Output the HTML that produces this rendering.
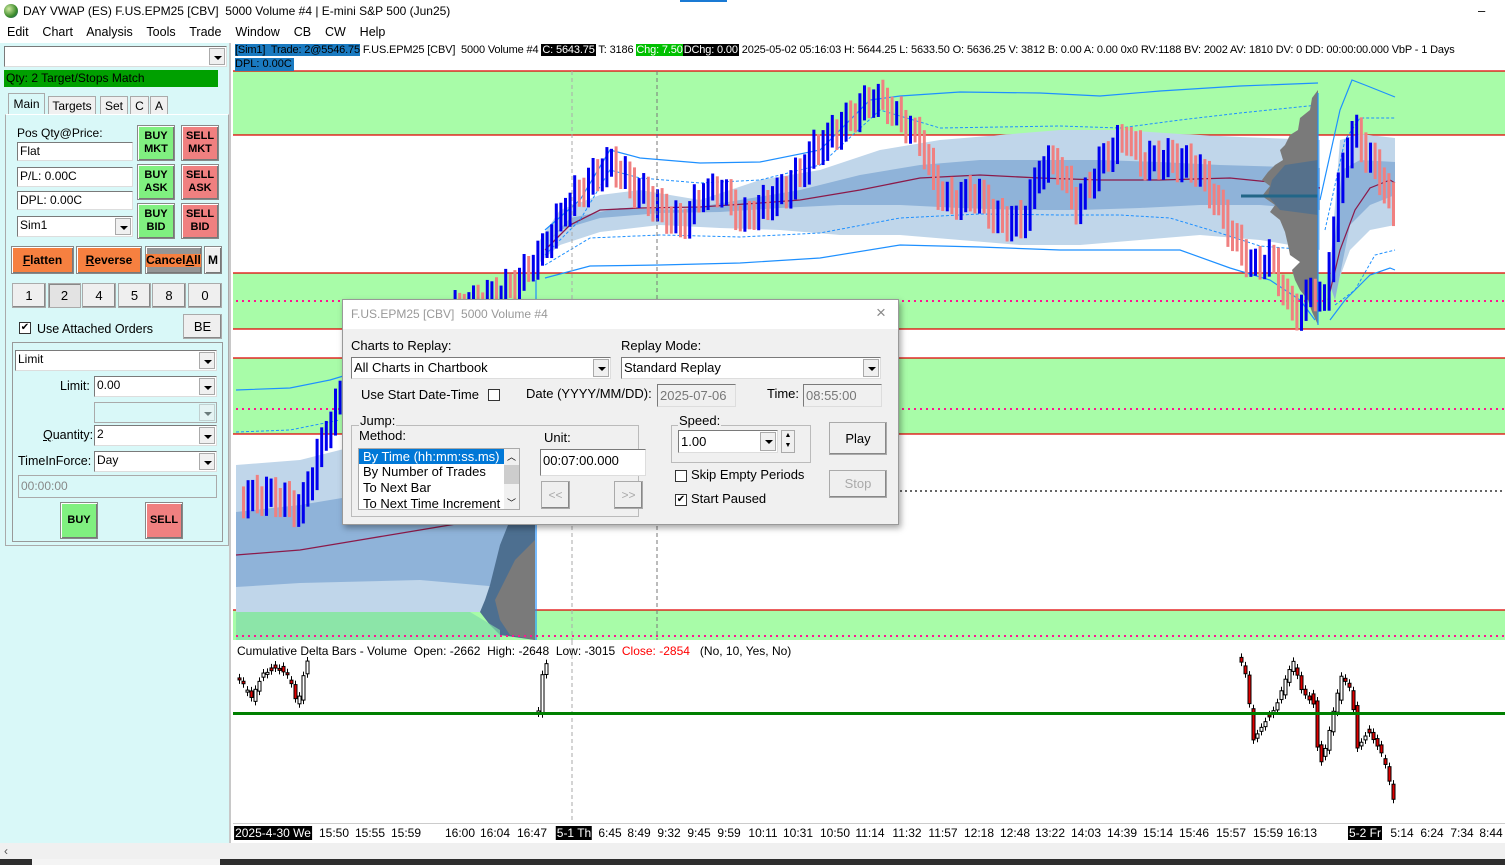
<!DOCTYPE html>
<html><head><meta charset="utf-8">
<style>
*{box-sizing:border-box;margin:0;padding:0}
body{width:1505px;height:865px;overflow:hidden;background:#fff;font-family:"Liberation Sans",Arial,sans-serif;font-size:12px;color:#000;position:relative}
.a{position:absolute}
.btn{position:absolute;border:1px solid #888;box-shadow:inset 1px 1px 0 #fff,inset -1px -1px 0 #777;text-align:center;font-weight:bold;font-size:11px;line-height:13px;display:flex;align-items:center;justify-content:center}
.inp{position:absolute;background:#fff;border:1px solid #7a7a7a;border-right-color:#ddd;border-bottom-color:#ddd;padding-left:2px;font-size:12px;line-height:17px;white-space:nowrap;overflow:hidden}
.dd{position:absolute;right:1px;top:1px;bottom:1px;width:16px;background:#f0f0f0;border:1px solid #aaa}
.dd:after{content:"";position:absolute;left:4px;top:7px;border-left:4px solid transparent;border-right:4px solid transparent;border-top:4px solid #000}
.nb{position:absolute;top:283px;height:25px;background:#efefef;border:1px solid #aaa;box-shadow:inset -1px -1px 0 #888;text-align:center;line-height:24px;font-size:13px}
.tab{position:absolute;top:96px;height:19px;background:#f0f0f0;border:1px solid #aaa;border-bottom:none;text-align:center;line-height:18px;font-size:12px}
.nar{font-family:"Liberation Sans Narrow","Liberation Sans",sans-serif}
.ax{position:absolute;top:826px;font-size:12px;transform:translateX(-50%);white-space:nowrap}
.blk{background:#000;color:#fff;padding:0 1px}
.dlg{font-size:13px}
</style></head><body>
<div class="a" style="left:0;top:0;width:1505px;height:22px;background:#fff"></div>
<div class="a" style="left:4px;top:4px;width:14px;height:14px;border-radius:50%;background:radial-gradient(circle at 35% 35%,#cfe9a0,#3a8a2a 60%,#1f5a8a)"></div>
<div class="a" style="left:23px;top:4px;font-size:12px">DAY VWAP (ES) F.US.EPM25 [CBV]&nbsp; 5000 Volume #4 | E-mini S&amp;P 500 (Jun25)</div>
<div class="a" style="left:680px;top:0;width:47px;height:2px;background:#1a7ad4"></div>
<div class="a" style="left:1478px;top:3px;font-size:13px">–</div>
<div class="a" style="left:7px;top:25px;font-size:12.5px">Edit&nbsp;&nbsp;&nbsp; Chart&nbsp;&nbsp;&nbsp; Analysis&nbsp;&nbsp;&nbsp; Tools&nbsp;&nbsp;&nbsp; Trade&nbsp;&nbsp;&nbsp; Window&nbsp;&nbsp;&nbsp; CB&nbsp;&nbsp;&nbsp; CW&nbsp;&nbsp;&nbsp; Help</div>

<div class="a" style="left:0;top:43px;width:231px;height:800px;background:#d9f8f8;border-right:2px solid #c8c8c8"></div>
<div class="inp" style="left:4px;top:46px;width:223px;height:21px"><div class="dd"></div></div>
<div class="a" style="left:4px;top:70px;width:214px;height:17px;background:#00a000;font-size:12px;line-height:17px;padding-left:2px">Qty: 2 Target/Stops Match</div>
<div class="tab" style="left:8px;top:93px;width:37px;height:22px;background:#d9f8f8;line-height:20px">Main</div>
<div class="tab" style="left:48px;width:48px">Targets</div>
<div class="tab" style="left:100px;width:28px">Set</div>
<div class="tab" style="left:130px;width:19px">C</div>
<div class="tab" style="left:150px;width:18px">A</div>
<div class="a" style="left:5px;top:114px;width:224px;height:432px;border:1px solid #aaa;border-top-color:#fff"></div>
<div class="a" style="left:17px;top:126px;font-size:12px">Pos Qty@Price:</div>
<div class="inp" style="left:17px;top:142px;width:116px;height:19px">Flat</div>
<div class="inp" style="left:17px;top:167px;width:116px;height:20px">P/L: 0.00C</div>
<div class="inp" style="left:17px;top:191px;width:116px;height:19px">DPL: 0.00C</div>
<div class="inp" style="left:17px;top:216px;width:116px;height:21px">Sim1<div class="dd"></div></div>
<div class="btn" style="left:137px;top:125px;width:38px;height:36px;background:#80f080">BUY<br>MKT</div>
<div class="btn" style="left:181px;top:125px;width:38px;height:36px;background:#f08080">SELL<br>MKT</div>
<div class="btn" style="left:137px;top:164px;width:38px;height:36px;background:#80f080">BUY<br>ASK</div>
<div class="btn" style="left:181px;top:164px;width:38px;height:36px;background:#f08080">SELL<br>ASK</div>
<div class="btn" style="left:137px;top:203px;width:38px;height:36px;background:#80f080">BUY<br>BID</div>
<div class="btn" style="left:181px;top:203px;width:38px;height:36px;background:#f08080">SELL<br>BID</div>
<div class="btn" style="left:11px;top:246px;width:63px;height:28px;background:#f68040;font-size:12px"><u>F</u>latten</div>
<div class="btn" style="left:76px;top:246px;width:66px;height:28px;background:#f68040;font-size:12px"><u>R</u>everse</div>
<div class="btn" style="left:145px;top:246px;width:57px;height:28px;background:#959595;font-size:12px"><span style="background:#f68040">Cancel<u>A</u>ll</span></div>
<div class="btn" style="left:204px;top:246px;width:18px;height:28px;background:#efefef;font-size:12px">M</div>
<div class="nb" style="left:12px;width:34px">1</div>
<div class="nb" style="left:48px;width:33px;background:#e3e3e3;box-shadow:inset 1px 1px 0 #888">2</div>
<div class="nb" style="left:82px;width:34px">4</div>
<div class="nb" style="left:118px;width:33px">5</div>
<div class="nb" style="left:152px;width:34px">8</div>
<div class="nb" style="left:188px;width:34px">0</div>
<div class="a" style="left:19px;top:322px;width:12px;height:12px;background:#fff;border:1px solid #333;font-size:10px;line-height:10px;text-align:center">✔</div>
<div class="a" style="left:37px;top:322px;font-size:12.5px">Use Attached Orders</div>
<div class="nb" style="left:183px;top:314px;width:39px;height:25px">BE</div>
<div class="a" style="left:12px;top:342px;width:211px;height:200px;border:1px solid #999"></div>
<div class="inp" style="left:15px;top:350px;width:202px;height:21px">Limit<div class="dd"></div></div>
<div class="a" style="left:60px;top:379px;font-size:12.5px">Limit:</div>
<div class="inp" style="left:94px;top:376px;width:123px;height:21px">0.00<div class="dd"></div></div>
<div class="inp" style="left:94px;top:402px;width:123px;height:21px;background:#d9f8f8;border-color:#aaa"><div class="dd" style="opacity:.5"></div></div>
<div class="a" style="left:43px;top:428px;font-size:12.5px"><u>Q</u>uantity:</div>
<div class="inp" style="left:94px;top:425px;width:123px;height:21px">2<div class="dd"></div></div>
<div class="a" style="left:18px;top:454px;font-size:12.5px">TimeInForce:</div>
<div class="inp" style="left:94px;top:451px;width:123px;height:21px">Day<div class="dd"></div></div>
<div class="inp" style="left:18px;top:475px;width:199px;height:23px;background:#d9f8f8;color:#888;border-color:#aaa;line-height:21px">00:00:00</div>
<div class="btn" style="left:60px;top:502px;width:38px;height:37px;background:#80f080">BUY</div>
<div class="btn" style="left:145px;top:502px;width:38px;height:37px;background:#f08080">SELL</div>

<svg class="a" style="left:233px;top:43px" width="1272" height="800" viewBox="233 43 1272 800">
<rect x="233" y="43" width="1272" height="800" fill="#fff"/>
<rect x="233" y="71" width="1272" height="64" fill="#a8fca8"/>
<rect x="233" y="273" width="1272" height="56" fill="#a8fca8"/>
<rect x="233" y="358" width="1272" height="76" fill="#a8fca8"/>
<rect x="233" y="610" width="1272" height="30" fill="#a8fca8"/>
<g stroke="#e00000" stroke-width="1.2">
<line x1="233" y1="71" x2="1505" y2="71"/><line x1="233" y1="135" x2="1505" y2="135"/>
<line x1="233" y1="273" x2="1505" y2="273"/><line x1="233" y1="329" x2="1505" y2="329"/>
<line x1="233" y1="358" x2="1505" y2="358"/><line x1="233" y1="434" x2="1505" y2="434"/>
<line x1="233" y1="610" x2="1505" y2="610"/>
</g>
<polygon points="236,465 300,460 360,445 420,430 480,410 535,395 535,612 300,612 236,612" fill="#c0d6ea"/>
<polygon points="236,512 300,505 360,495 420,485 480,470 535,465 535,590 420,580 300,583 236,587" fill="#8fb3d9"/>
<polyline points="236,555 300,550 360,540 420,530 480,520 535,512" fill="none" stroke="#8b1a4a" stroke-width="1.3"/>
<polyline points="236,390 290,388 330,380 380,365" fill="none" stroke="#1e90ff" stroke-width="1.2"/>
<polyline points="236,432 290,430 340,420" fill="none" stroke="#1e90ff" stroke-dasharray="3,2"/>
<polygon points="540,240 560,210 600,195 640,190 700,200 760,180 820,170 880,150 940,140 1000,135 1060,130 1120,130 1180,134 1240,137 1320,140 1320,250 1260,240 1200,235 1140,240 1080,245 1020,245 960,240 900,235 840,235 780,230 720,228 660,225 600,232 560,245 540,262" fill="#c0d6ea"/>
<polygon points="545,245 570,218 620,208 680,210 740,200 800,190 860,175 920,165 980,160 1040,160 1100,160 1160,162 1220,165 1320,168 1320,210 1260,205 1200,205 1140,208 1080,210 1020,210 960,208 900,205 840,205 780,208 720,212 660,213 600,218 560,230" fill="#8fb3d9"/>
<polyline points="545,250 570,225 600,210 640,208 700,207 760,203 800,200 860,190 920,178 980,175 1040,178 1100,180 1160,180 1230,178 1300,185 1320,188" fill="none" stroke="#8b1a4a" stroke-width="1.3"/>
<polyline points="545,230 580,200 610,150 640,158 700,163 760,162 820,150 870,100 900,96 960,92 1040,93 1100,96 1160,91 1240,86 1318,83" fill="none" stroke="#1e90ff" stroke-width="1.2"/>
<polyline points="545,255 580,220 610,170 640,178 700,183 760,180 820,165 880,110 940,128 1000,127 1060,126 1120,128 1180,120 1240,113 1318,105" fill="none" stroke="#1e90ff" stroke-dasharray="3,2"/>
<polyline points="545,265 590,238 660,235 740,237 820,233 900,218 980,214 1060,215 1120,215 1170,218 1220,233 1260,246 1310,250" fill="none" stroke="#1e90ff" stroke-dasharray="3,2"/>
<polyline points="545,278 590,266 660,265 740,263 820,258 900,245 980,247 1060,250 1130,250 1180,250 1230,268 1270,280 1300,300 1315,320" fill="none" stroke="#1e90ff" stroke-width="1.2"/>
<polygon points="1330,270 1340,140 1360,134 1395,138 1395,225 1370,230 1350,250 1335,290" fill="#c0d6ea"/>
<polygon points="1330,285 1342,170 1360,160 1395,162 1395,195 1370,205 1350,225 1335,300" fill="#8fb3d9"/>
<polyline points="1328,300 1340,250 1355,210 1370,188 1390,180 1395,183" fill="none" stroke="#8b1a4a" stroke-width="1.2"/>
<polyline points="1320,200 1340,110 1352,80 1365,85 1395,97" fill="none" stroke="#1e90ff" stroke-width="1.2"/>
<polyline points="1325,230 1345,140 1360,118 1395,118" fill="none" stroke="#1e90ff" stroke-dasharray="3,2"/>
<polyline points="1335,305 1355,290 1375,255 1395,250" fill="none" stroke="#1e90ff" stroke-dasharray="3,2"/>
<polyline points="1330,320 1345,300 1370,275 1390,268 1395,270" fill="none" stroke="#1e90ff" stroke-width="1.2"/>
<polygon points="1318,90 1312,98 1310,110 1300,118 1298,130 1290,135 1285,145 1280,150 1283,160 1275,165 1268,172 1262,180 1270,186 1262,196 1275,205 1270,212 1280,220 1285,232 1288,245 1290,255 1300,262 1292,270 1295,280 1300,290 1308,300 1312,312 1318,325" fill="#7a7a7a"/>
<polygon points="1318,160 1285,165 1272,180 1268,196 1280,210 1318,215" fill="#4d6f90" opacity="0.8"/>
<line x1="1241" y1="196" x2="1318" y2="196" stroke="#226688" stroke-width="3"/>
<line x1="1318" y1="93" x2="1318" y2="325" stroke="#1e90ff" stroke-width="1.2"/>
<polygon points="535,470 525,480 520,500 510,520 500,545 495,565 490,585 485,600 480,612 490,625 500,635 535,640" fill="#4d6f90"/>
<polygon points="535,540 515,560 505,580 495,600 500,620 510,635 535,640" fill="#7a7a7a"/>
<polygon points="236,612 470,612 500,630 500,640 236,640" fill="#80dca8" opacity="0.7"/>
<line x1="536" y1="280" x2="536" y2="640" stroke="#1e90ff" stroke-width="1.2"/>
<g stroke="#ff1493" stroke-width="2" stroke-dasharray="2,4">
<line x1="236" y1="301" x2="1505" y2="301"/><line x1="236" y1="409" x2="1505" y2="409"/><line x1="236" y1="636" x2="1505" y2="636"/>
</g>
<line x1="540" y1="491" x2="1505" y2="491" stroke="#333" stroke-width="1.5" stroke-dasharray="2,3"/>
<g id="bars"></g>
<line x1="572" y1="71" x2="572" y2="823" stroke="#aaa" stroke-dasharray="4,3"/>
<line x1="657" y1="71" x2="657" y2="640" stroke="#777" stroke-dasharray="4,3"/>
<rect x="233" y="641" width="1272" height="182" fill="#fff"/>
<line x1="572" y1="641" x2="572" y2="823" stroke="#aaa" stroke-dasharray="4,3"/>
<g id="cd"></g>
<line x1="233" y1="713.5" x2="1505" y2="713.5" stroke="#008000" stroke-width="3"/>
<line x1="233" y1="823.5" x2="1505" y2="823.5" stroke="#ccc"/>
<rect x="233" y="824" width="1272" height="20" fill="#fff"/>
</svg>

<div class="a" style="left:235px;top:43px;width:1270px;height:15px;background:#fff;font-size:11px;line-height:15px;white-space:nowrap;overflow:hidden;letter-spacing:-0.15px"><span style="background:#1a7ac0">[Sim1]&nbsp; Trade: 2@5546.75</span> F.US.EPM25 [CBV]&nbsp; 5000 Volume #4 <span class="blk">C: 5643.75</span> T: 3186 <span style="background:#00c000;color:#fff">Chg: 7.50</span><span class="blk">DChg: 0.00</span> 2025-05-02 05:16:03 H: 5644.25 L: 5633.50 O: 5636.25 V: 3812 B: 0.00 A: 0.00 0x0 RV:1188 BV: 2002 AV: 1810 DV: 0 DD: 00:00:00.000 VbP - 1 Days</div>
<div class="a" style="left:235px;top:58px;height:13px;background:#1a7ac0;font-size:11px;line-height:13px;padding-right:2px">DPL: 0.00C</div>
<div class="a" style="left:237px;top:644px;font-size:12px">Cumulative Delta Bars - Volume&nbsp; Open: -2662&nbsp; High: -2648&nbsp; Low: -3015&nbsp; <span style="color:#f00">Close: -2854</span>&nbsp;&nbsp; (No, 10, Yes, No)</div>

<div>
<div class="ax blk" style="left:273px">2025-4-30 We</div>
<div class="ax" style="left:334px">15:50</div><div class="ax" style="left:370px">15:55</div><div class="ax" style="left:406px">15:59</div>
<div class="ax" style="left:460px">16:00</div><div class="ax" style="left:495px">16:04</div><div class="ax" style="left:532px">16:47</div>
<div class="ax blk" style="left:574px">5-1 Th</div>
<div class="ax" style="left:610px">6:45</div><div class="ax" style="left:639px">8:49</div><div class="ax" style="left:669px">9:32</div><div class="ax" style="left:699px">9:45</div><div class="ax" style="left:729px">9:59</div><div class="ax" style="left:763px">10:11</div><div class="ax" style="left:798px">10:31</div><div class="ax" style="left:835px">10:50</div><div class="ax" style="left:870px">11:14</div><div class="ax" style="left:907px">11:32</div><div class="ax" style="left:943px">11:57</div><div class="ax" style="left:979px">12:18</div><div class="ax" style="left:1015px">12:48</div><div class="ax" style="left:1050px">13:22</div><div class="ax" style="left:1086px">14:03</div><div class="ax" style="left:1122px">14:39</div><div class="ax" style="left:1158px">15:14</div><div class="ax" style="left:1194px">15:46</div><div class="ax" style="left:1231px">15:57</div><div class="ax" style="left:1268px">15:59</div><div class="ax" style="left:1302px">16:13</div>
<div class="ax blk" style="left:1365px">5-2 Fr</div>
<div class="ax" style="left:1402px">5:14</div><div class="ax" style="left:1432px">6:24</div><div class="ax" style="left:1462px">7:34</div><div class="ax" style="left:1491px">8:44</div>
</div>
<div class="a" style="left:0;top:843px;width:1505px;height:16px;background:#f0f0f0"></div>
<div class="a" style="left:4px;top:844px;font-size:12px;color:#555">‹</div>
<div class="a" style="left:0;top:859px;width:1505px;height:6px;background:#2e2e2e"></div>
<div class="a" style="left:32px;top:859px;width:188px;height:6px;background:#f4f4f4"></div>

<div class="a dlg" style="left:342px;top:299px;width:557px;height:226px;background:#f0f0f0;border:1px solid #999;box-shadow:2px 3px 6px rgba(0,0,0,.35)">
<div class="a" style="left:0;top:0;width:555px;height:29px;background:#fff"></div>
<div class="a" style="left:8px;top:7px;color:#999;font-size:12px">F.US.EPM25 [CBV]&nbsp; 5000 Volume #4</div>
<div class="a" style="left:533px;top:3px;color:#888;font-size:17px">×</div>
<div class="a" style="left:8px;top:38px">Charts to Replay:</div>
<div class="inp" style="left:8px;top:57px;width:260px;height:22px;font-size:13px;line-height:20px">All Charts in Chartbook<div class="dd"></div></div>
<div class="a" style="left:278px;top:38px">Replay Mode:</div>
<div class="inp" style="left:278px;top:57px;width:260px;height:22px;font-size:13px;line-height:20px">Standard Replay<div class="dd"></div></div>
<div class="a" style="left:18px;top:87px">Use Start Date-Time</div>
<div class="a" style="left:145px;top:89px;width:12px;height:12px;background:#fff;border:1px solid #333"></div>
<div class="a" style="left:183px;top:86px">Date (YYYY/MM/DD):</div>
<div class="inp" style="left:314px;top:84px;width:79px;height:23px;background:#f0f0f0;color:#777;line-height:21px;font-size:13px">2025-07-06</div>
<div class="a" style="left:424px;top:86px">Time:</div>
<div class="inp" style="left:460px;top:84px;width:79px;height:23px;background:#f0f0f0;color:#777;line-height:21px;font-size:13px">08:55:00</div>
<div class="a" style="left:8px;top:125px;width:288px;height:92px;border:1px solid #bbb"></div>
<div class="a" style="left:16px;top:113px;background:#f0f0f0;padding:0 1px">Jump:</div>
<div class="a" style="left:16px;top:128px">Method:</div>
<div class="a" style="left:15px;top:148px;width:162px;height:62px;background:#fff;border:1px solid #aaa;overflow:hidden;font-size:13px">
<div style="background:#0078d7;color:#fff;width:145px;padding-left:4px;line-height:15px">By Time (hh:mm:ss.ms)</div>
<div style="padding-left:4px;line-height:16px">By Number of Trades</div>
<div style="padding-left:4px;line-height:16px">To Next Bar</div>
<div style="padding-left:4px;line-height:16px;white-space:nowrap">To Next Time Increment (h</div>
<div class="a" style="left:145px;top:0;width:16px;height:60px;background:#f0f0f0"><div style="margin-top:16px;height:19px;background:#cdcdcd"></div><div class="a" style="top:1px;left:3px;font-size:9px">︿</div><div class="a" style="top:47px;left:3px;font-size:9px">﹀</div></div>
</div>
<div class="a" style="left:201px;top:130px">Unit:</div>
<div class="inp" style="left:197px;top:149px;width:106px;height:27px;font-size:13px;line-height:22px">00:07:00.000</div>
<div class="nb" style="left:198px;top:181px;width:29px;height:28px;color:#aaa;line-height:26px;font-size:12px">&lt;&lt;</div>
<div class="nb" style="left:271px;top:181px;width:29px;height:28px;color:#aaa;line-height:26px;font-size:12px">&gt;&gt;</div>
<div class="a" style="left:328px;top:125px;width:140px;height:38px;border:1px solid #bbb"></div>
<div class="a" style="left:335px;top:113px;background:#f0f0f0;padding:0 1px">Speed:</div>
<div class="inp" style="left:335px;top:130px;width:100px;height:23px;font-size:13px;line-height:21px">1.00<div class="dd"></div></div>
<div class="a" style="left:438px;top:130px;width:14px;height:23px;background:#f0f0f0;border:1px solid #aaa;font-size:7px;text-align:center;line-height:10px">▲<br>▼</div>
<div class="nb" style="left:486px;top:122px;width:58px;height:33px;line-height:31px;font-size:13px">Play</div>
<div class="a" style="left:332px;top:170px;width:12px;height:12px;background:#fff;border:1px solid #333"></div>
<div class="a" style="left:348px;top:167px">Skip Empty Periods</div>
<div class="a" style="left:332px;top:194px;width:12px;height:12px;background:#fff;border:1px solid #333;font-size:10px;line-height:10px;text-align:center">✔</div>
<div class="a" style="left:348px;top:191px">Start Paused</div>
<div class="nb" style="left:486px;top:170px;width:58px;height:28px;line-height:26px;font-size:13px;color:#aaa">Stop</div>
</div>

<script>
(function(){
var NS="http://www.w3.org/2000/svg";
function interp(p,x){if(x<p[0][0])return p[0][1];for(var i=0;i<p.length-1;i++){if(x>=p[i][0]&&x<=p[i+1][0]){var t=(x-p[i][0])/(p[i+1][0]-p[i][0]);return p[i][1]+t*(p[i+1][1]-p[i][1]);}}return p[p.length-1][1];}
function el(n,a,par){var e=document.createElementNS(NS,n);for(var k in a)e.setAttribute(k,a[k]);par.appendChild(e);return e;}
var P=[[237,495],[270,500],[298,510],[320,440],[345,380],[400,330],[470,310],[500,290],[520,275],[540,255],[565,210],[600,165],[612,160],[630,185],[660,215],[680,225],[700,190],[720,190],[740,225],[760,210],[790,180],[810,150],[840,130],[870,100],[880,97],[905,125],[920,145],[935,195],[950,205],[975,190],[995,215],[1020,225],[1040,170],[1055,165],[1075,205],[1100,160],[1125,140],[1140,165],[1170,155],[1195,165],[1215,205],[1230,240],[1250,268],[1270,255],[1285,300],[1298,315],[1310,290],[1322,312],[1332,230],[1342,160],[1352,128],[1365,150],[1380,175],[1395,222]];
var g=document.getElementById("bars");
for(var x=242;x<=1393;x+=4.6){
 var y=interp(P,x),py=interp(P,x-4.6);
 var f=function(z){return Math.sin(z*0.37)*6+Math.sin(z*1.3)*4;};
 var yy=y+f(x),pp=py+f(x-4.6);
 var up=yy<pp;
 var top=Math.min(yy,pp)-10-Math.abs(Math.sin(x))*6, bot=Math.max(yy,pp)+10+Math.abs(Math.cos(x*0.7))*5;
 el("rect",{x:x,y:top,width:3,height:bot-top,fill:up?"#0000ee":"#f08080"},g);
}
var cd=document.getElementById("cd");
function candles(pts,x0,x1,step){
 for(var x=x0;x<=x1;x+=step){
  var o=interp(pts,x-step)+Math.sin(x)*3,c=interp(pts,x)+Math.cos(x*1.7)*4;
  var t=Math.min(o,c),h=Math.max(2,Math.abs(c-o));
  el("line",{x1:x+1.5,x2:x+1.5,y1:t-4,y2:t+h+4,stroke:"#000"},cd);
  el("rect",{x:x,y:t,width:3,height:h,fill:c>o?"#e00000":"#fff",stroke:"#000","stroke-width":1},cd);
 }
}
candles([[237,680],[250,700],[262,670],[275,665],[288,680],[296,710],[305,660],[310,660]],238,306,4);
candles([[530,712],[537,712],[540,680],[548,660]],537,547,4);
candles([[1236,655],[1245,680],[1252,740],[1262,720],[1275,705],[1285,680],[1292,665],[1300,690],[1312,700],[1318,765],[1325,745],[1333,710],[1340,680],[1350,690],[1356,745],[1362,735],[1367,728],[1375,745],[1382,760],[1388,785],[1395,815]],1240,1393,4);
})();
</script>
</body></html>
